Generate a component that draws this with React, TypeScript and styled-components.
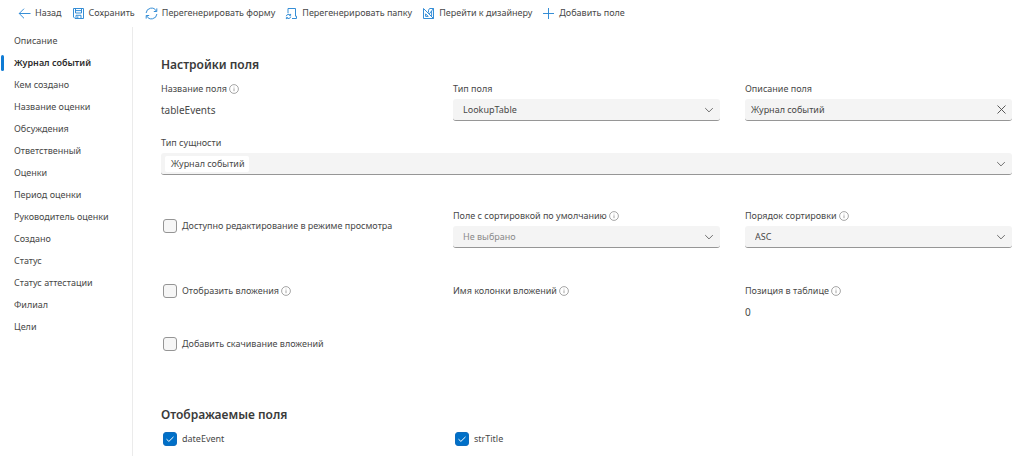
import React, { useState } from "react";
import styled, { createGlobalStyle, css } from "styled-components";

const GlobalStyle = createGlobalStyle`
  *, *::before, *::after { box-sizing: border-box; }
  body { margin: 0; background: #ffffff; }
  body, button, input, select {
    font-family: "Noto Sans", "Open Sans", sans-serif;
    font-size: 9px;
    line-height: 14px;
    color: #484848;
  }
`;

const Page = styled.div`
  display: flex;
  flex-direction: column;
  min-height: 100vh;
`;

const Toolbar = styled.header`
  display: flex;
  flex-wrap: wrap;
  align-items: center;
  gap: 10px;
  padding: 3px 18px 4px;
`;

const ToolButton = styled.button`
  display: flex;
  align-items: center;
  gap: 4px;
  height: 20px;
  padding: 0;
  border: 0;
  background: none;
  white-space: nowrap;
  cursor: pointer;

  svg {
    flex: none;
    color: #2b88d4;
  }
`;

const Body = styled.div`
  display: flex;
  flex: 1;
`;

const Sidebar = styled.nav`
  flex: none;
  width: 133px;
  padding-top: 3px;
  border-right: 1px solid #ebebeb;
`;

const NavLink = styled.a<{ $active?: boolean }>`
  display: flex;
  align-items: center;
  height: 22px;
  padding-left: 14px;
  color: #484848;
  text-decoration: none;
  white-space: nowrap;

  ${({ $active }) =>
    $active &&
    css`
      padding-left: 10px;
      font-weight: 600;
      color: #2c2c2c;

      &::before {
        content: "";
        width: 3px;
        height: 16px;
        margin: 0 10px 0 -9px;
        border-radius: 2px;
        background: #0f7bd4;
      }
    `}
`;

const Content = styled.main`
  flex: 1;
  min-width: 0;
  padding: 29px 12px 0 28px;
`;

const Heading = styled.h2`
  margin: 0;
  font-size: 12px;
  line-height: 18px;
  font-weight: 600;
  color: #3a3a3a;
  white-space: nowrap;
`;

const Row = styled.div<{ $top: number }>`
  display: grid;
  grid-template-columns: repeat(3, minmax(0, 1fr));
  column-gap: 25px;
  margin-top: ${({ $top }) => $top}px;
`;

const Field = styled.div<{ $wide?: boolean }>`
  display: flex;
  flex-direction: column;
  gap: 3px;
  ${({ $wide }) => $wide && "grid-column: 1 / -1;"}
`;

const LabelLine = styled.div`
  display: flex;
  align-items: center;
  gap: 2px;
  height: 14px;
`;

const Value = styled.output`
  display: flex;
  align-items: center;
  height: 22px;
  font-size: 10px;
`;

const Box = styled.div`
  display: grid;
  align-items: center;
  height: 22px;
  border-bottom: 1px solid #969696;
  border-radius: 3px;
  background: #f4f4f4;

  > * {
    grid-area: 1 / 1;
  }

  > svg {
    justify-self: end;
    margin-right: 6px;
    pointer-events: none;
  }
`;

const SelectControl = styled.select<{ $muted?: boolean }>`
  appearance: none;
  width: 100%;
  height: 21px;
  padding: 0 24px 0 10px;
  border: 0;
  background: none;
  color: ${({ $muted }) => ($muted ? "#8a8a8a" : "#484848")};
`;

const TextControl = styled.input`
  width: 100%;
  height: 21px;
  padding: 0 24px 0 6px;
  border: 0;
  background: none;
`;

const ClearButton = styled.button`
  display: flex;
  justify-self: end;
  margin-right: 5px;
  padding: 0;
  border: 0;
  background: none;
`;

const PickerControl = styled.button`
  display: flex;
  align-items: center;
  width: 100%;
  height: 21px;
  padding: 0 4px;
  border: 0;
  background: none;
`;

const Tag = styled.span`
  padding: 1px 4px 1px 6px;
  border-radius: 2px;
  background: #ffffff;
`;

const CheckLine = styled.div<{ $top?: number }>`
  display: flex;
  align-items: center;
  align-self: start;
  gap: 5px;
  height: 14px;
  margin-top: ${({ $top = 0 }) => $top}px;
  padding-left: 2px;
`;

const CheckFrame = styled.span`
  display: grid;
  flex: none;

  > * {
    grid-area: 1 / 1;
  }

  svg {
    place-self: center;
    pointer-events: none;
  }
`;

const CheckInput = styled.input`
  appearance: none;
  width: 14px;
  height: 14px;
  margin: 0;
  border: 1px solid #959595;
  border-radius: 3px;
  background: #f6f6f6;

  &:checked {
    border-color: #0f6cbd;
    background: #0070c8;
  }
`;

const InfoIcon = () => (
  <svg width="10" height="10" viewBox="0 0 10 10" fill="none" stroke="#808080" strokeWidth="0.7" aria-hidden="true">
    <circle cx="5" cy="5" r="4.4" />
    <path d="M5 4.3V7.2M5 2.7V3.4" />
  </svg>
);

const ChevronIcon = () => (
  <svg width="10" height="10" viewBox="0 0 10 10" fill="none" stroke="#606060" strokeWidth="0.9" aria-hidden="true">
    <path d="M1.2 3.1L5 6.9L8.8 3.1" />
  </svg>
);

const CloseIcon = () => (
  <svg width="11" height="11" viewBox="0 0 11 11" fill="none" stroke="#484848" strokeWidth="0.9" aria-hidden="true">
    <path d="M1.5 1.5L9.5 9.5M9.5 1.5L1.5 9.5" />
  </svg>
);

const toolIcons = {
  back: <path d="M12.5 6.5H1.2M6 1.7L1.2 6.5L6 11.3" />,
  save: (
    <>
      <path d="M1.5 1.5H11.5V11.5H3L1.5 10Z" />
      <path d="M3.5 1.5V6H9.5V1.5M4 11.5V8.3H9V11.5M5.8 9.3V11.5M3.5 3.6H9.5" />
    </>
  ),
  refresh: (
    <>
      <path d="M1.1 6A5.4 5.4 0 0 1 11.3 4.1M11.9 7A5.4 5.4 0 0 1 1.7 8.9" />
      <path d="M11.8 1.4V4.5H8.8M1.2 11.6V8.5H4.2" />
    </>
  ),
  folder: (
    <>
      <path d="M3 6.2V1.5H10.5V9.2H11.5V11.5H7" />
      <path d="M1.3 9.2A2.2 2.2 0 0 1 5.2 8.2M5.7 9.6A2.2 2.2 0 0 1 1.8 10.7M5.6 6.9V8.4H4.2M1.4 12.1V10.6H2.8" />
    </>
  ),
  designer: (
    <>
      <path d="M1.5 1.5V11.5H11.5ZM3.6 6.8V9.4H6.2Z" />
      <path d="M6.5 5.5V3.2L7.6 1.5H11.5V11.5M11.5 1.5L7.2 7M9.6 4V9.5" />
    </>
  ),
  add: <path d="M6.5 1V12M1 6.5H12" />,
};

const ToolIcon = ({ name }: { name: keyof typeof toolIcons }) => (
  <svg width="13" height="13" viewBox="0 0 13 13" fill="none" stroke="currentColor" strokeWidth="0.95" aria-hidden="true">
    {toolIcons[name]}
  </svg>
);

const tools: { icon: keyof typeof toolIcons; text: string }[] = [
  { icon: "back", text: "Назад" },
  { icon: "save", text: "Сохранить" },
  { icon: "refresh", text: "Перегенерировать форму" },
  { icon: "folder", text: "Перегенерировать папку" },
  { icon: "designer", text: "Перейти к дизайнеру" },
  { icon: "add", text: "Добавить поле" },
];

const sections = [
  "Описание",
  "Журнал событий",
  "Кем создано",
  "Название оценки",
  "Обсуждения",
  "Ответственный",
  "Оценки",
  "Период оценки",
  "Руководитель оценки",
  "Создано",
  "Статус",
  "Статус аттестации",
  "Филиал",
  "Цели",
];

interface LabelProps {
  htmlFor: string;
  text: string;
  info?: boolean;
}

const FieldLabel = ({ htmlFor, text, info }: LabelProps) => (
  <LabelLine>
    <label htmlFor={htmlFor}>{text}</label>
    {info && <InfoIcon />}
  </LabelLine>
);

interface SelectProps {
  id: string;
  label: string;
  value: string;
  info?: boolean;
  muted?: boolean;
}

const SelectField = ({ id, label, value, info, muted }: SelectProps) => (
  <Field>
    <FieldLabel htmlFor={id} text={label} info={info} />
    <Box>
      <SelectControl id={id} $muted={muted} defaultValue={value}>
        <option>{value}</option>
      </SelectControl>
      <ChevronIcon />
    </Box>
  </Field>
);

interface CheckProps {
  id: string;
  label: string;
  initial?: boolean;
  info?: boolean;
  top?: number;
}

const CheckField = ({ id, label, initial = false, info, top }: CheckProps) => {
  const [checked, setChecked] = useState(initial);
  return (
    <CheckLine $top={top}>
      <CheckFrame>
        <CheckInput id={id} type="checkbox" checked={checked} onChange={() => setChecked(!checked)} />
        {checked && (
          <svg width="10" height="10" viewBox="0 0 10 10" fill="none" stroke="#ffffff" strokeWidth="1" aria-hidden="true">
            <path d="M1.5 5.2L3.9 7.4L8.5 2.9" />
          </svg>
        )}
      </CheckFrame>
      <FieldLabel htmlFor={id} text={label} info={info} />
    </CheckLine>
  );
};

export default function App() {
  const [description, setDescription] = useState("Журнал событий");

  return (
    <Page>
      <GlobalStyle />
      <Toolbar>
        {tools.map(({ icon, text }) => (
          <ToolButton key={text} type="button">
            <ToolIcon name={icon} />
            {text}
          </ToolButton>
        ))}
      </Toolbar>
      <Body>
        <Sidebar>
          {sections.map((name, index) => (
            <NavLink key={name} href="#" $active={index === 1}>
              {name}
            </NavLink>
          ))}
        </Sidebar>
        <Content>
          <Heading>Настройки поля</Heading>
          <Row $top={8}>
            <Field>
              <FieldLabel htmlFor="name" text="Название поля" info />
              <Value id="name">tableEvents</Value>
            </Field>
            <SelectField id="type" label="Тип поля" value="LookupTable" />
            <Field>
              <FieldLabel htmlFor="description" text="Описание поля" />
              <Box>
                <TextControl
                  id="description"
                  value={description}
                  onChange={(event) => setDescription(event.target.value)}
                />
                <ClearButton type="button" aria-label="Очистить" onClick={() => setDescription("")}>
                  <CloseIcon />
                </ClearButton>
              </Box>
            </Field>
          </Row>
          <Row $top={15}>
            <Field $wide>
              <FieldLabel htmlFor="entity" text="Тип сущности" />
              <Box>
                <PickerControl id="entity" type="button" aria-haspopup="listbox">
                  <Tag>Журнал событий</Tag>
                </PickerControl>
                <ChevronIcon />
              </Box>
            </Field>
          </Row>
          <Row $top={34}>
            <CheckField id="editable" label="Доступно редактирование в режиме просмотра" top={10} />
            <SelectField id="sort" label="Поле с сортировкой по умолчанию" value="Не выбрано" info muted />
            <SelectField id="order" label="Порядок сортировки" value="ASC" info />
          </Row>
          <Row $top={36}>
            <CheckField id="attachments" label="Отобразить вложения" info />
            <Field>
              <FieldLabel htmlFor="column" text="Имя колонки вложений" info />
              <Value id="column" />
            </Field>
            <Field>
              <FieldLabel htmlFor="position" text="Позиция в таблице" info />
              <Value id="position">0</Value>
            </Field>
          </Row>
          <Row $top={14}>
            <CheckField id="download" label="Добавить скачивание вложений" />
          </Row>
          <Row $top={55}>
            <Heading>Отображаемые поля</Heading>
          </Row>
          <Row $top={8}>
            <CheckField id="dateEvent" label="dateEvent" initial />
            <CheckField id="strTitle" label="strTitle" initial />
          </Row>
        </Content>
      </Body>
    </Page>
  );
}
